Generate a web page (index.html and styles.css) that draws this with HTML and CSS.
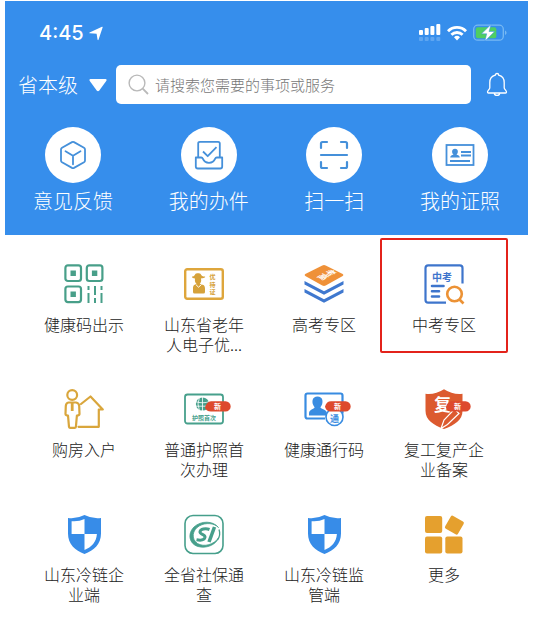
FILE: index.html
```html
<!DOCTYPE html>
<html lang="zh-CN">
<head>
<meta charset="utf-8">
<meta name="viewport" content="width=device-width, initial-scale=1">
<title>政务服务</title>
<link rel="stylesheet" href="styles.css">
</head>
<body>
<div class="app">
  <header class="header">
    <div class="status">
      <div class="status-side">
        <span class="time">4:45</span>
        <svg width="14" height="15" viewBox="0 0 14 15"><path d="M13 .8q.9-.2.6.7L9.500 13.800q-.5.900-.9 0L7.600 7.800 1 7.300q-1.200-.2-.4-.9z" fill="#fff"/></svg>
      </div>
      <div class="status-side status-right">
        <svg width="22" height="18" viewBox="0 0 22 18">
          <g fill="#fff"><rect x="0" y="6" width="4" height="5" rx="1"/><rect x="5.7" y="4" width="4" height="7" rx="1"/><rect x="11.4" y="2" width="4" height="9" rx="1"/><rect x="17.3" width="4" height="11" rx="1"/></g>
          <g fill="#5fa6f1"><rect y="13" width="4" height="4" rx="1"/><rect x="5.7" y="13" width="4" height="4" rx="1"/><rect x="11.4" y="13" width="4" height="4" rx="1"/><rect x="17.3" y="13" width="4" height="4" rx="1"/></g>
        </svg>
        <svg width="20" height="16" viewBox="0 0 20 16" fill="none" stroke="#fff" stroke-width="2.8"><path d="M1 6.2a12.6 12.6 0 0 1 18 0M4.4 9.8a8 8 0 0 1 11.2 0"/><path d="M7 12.2a4.4 4.4 0 0 1 6 0L10 15.6z" fill="#fff" stroke="none"/></svg>
        <svg width="34" height="18" viewBox="0 0 34 18">
          <rect x=".7" y="1.2" width="29.6" height="15" rx="4" fill="none" stroke="#78b9f3" stroke-width="1.3"/>
          <path d="M32 6.5c2 .8 2 3.700 0 4.500z" fill="#78b9f3"/>
          <rect x="2.800" y="3.200" width="20.500" height="11" rx="2" fill="#4fce62"/>
          <path d="M18 .6 8.500 9.800h5.200L12 17l9.600-9.500h-5.600z" fill="#fff" stroke="#3a90e8" stroke-width=".5"/>
        </svg>
      </div>
    </div>
    <form class="search-row">
      <div class="region">
        <select class="region-select" aria-label="地区"><option>省本级</option></select>
        <svg class="caret" width="18" height="13" viewBox="0 0 18 13"><path d="M1.500 0h15q1.800.4.700 2L10.300 11.600q-1.300 1.400-2.600 0L.8 2Q-.2.4 1.500 0z" fill="#fff"/></svg>
      </div>
      <label class="search">
        <svg width="21" height="21" viewBox="0 0 21 21" fill="none" stroke="#b9b9b9" stroke-width="1.400"><circle cx="9" cy="9" r="7.900"/><path d="m14.700 14.700 5.300 5.300" stroke-width="1.800"/></svg>
        <input class="search-input" type="text" placeholder="请搜索您需要的事项或服务" aria-label="搜索">
      </label>
      <button class="bell" type="button" aria-label="消息">
        <svg width="22" height="25" viewBox="0 0 22 25" fill="none" stroke="#fff" stroke-width="1.300" stroke-linejoin="round"><path d="M9.300 3.200a1.700 1.700 0 0 1 3.400 0c3.700 1 5.500 4 5.500 7.300v5.200c0 1.600 2.300 2.800 2.300 4.300 0 .7-.4 1-1 1h-17c-.6 0-1-.3-1-1 0-1.500 2.300-2.700 2.300-4.300v-5.200c0-3.300 1.800-6.300 5.500-7.300zM8.300 21.300c.4 2.700 5 2.700 5.400 0"/></svg>
      </button>
    </form>
    <nav class="quick">
      <a class="quick-item" href="#">
        <span class="disc"><svg width="28" height="30" viewBox="0 0 28 30" fill="none" stroke="#4590da" stroke-width="1.800" stroke-linejoin="round" stroke-linecap="round"><path d="M13 2.100q1-.5 2 0l10 5.600q1 .6 1 1.700v11.200q0 1.100-1 1.700l-10 5.600q-1 .5-2 0L3 22.300q-1-.6-1-1.700V9.400q0-1.100 1-1.700zM6.500 11.200l7.500 4.500 7.500-4.500M14 15.700v8.600"/></svg></span>
        意见反馈
      </a>
      <a class="quick-item" href="#">
        <span class="disc"><svg width="30" height="30" viewBox="0 0 30 30" fill="none" stroke="#4590da" stroke-width="1.800" stroke-linejoin="round"><path d="M4.200 17.500V3.500q0-1.700 1.700-1.700h18.200q1.700 0 1.700 1.700v14M9 11.500l4.700 4.700 8.800-9M4.500 17.500H1.800v9q0 2 2 2h22.400q2 0 2-2v-9h-5.500q-1 0-1.500 1.200c-2.300 5.500-10.100 5.500-12.400 0q-.5-1.200-1.500-1.200z"/></svg></span>
        我的办件
      </a>
      <a class="quick-item" href="#">
        <span class="disc"><svg width="30" height="30" viewBox="0 0 30 30" fill="none" stroke="#4590da" stroke-width="2.200" stroke-linecap="round"><path d="M2 8V3.500Q2 2 3.500 2H8M22 2h4.500Q28 2 28 3.500V8M2 22v4.500Q2 28 3.500 28H8M22 28h4.500q1.500 0 1.500-1.500V22M2 15h26"/></svg></span>
        扫一扫
      </a>
      <a class="quick-item" href="#">
        <span class="disc"><svg width="30" height="24" viewBox="0 0 30 24" fill="none" stroke="#4590da" stroke-width="1.800"><rect x="1.500" y="2" width="27" height="20"/><path d="M16 9h10M16 12.500h10M5 18h20"/><path d="M10 5.800c3.800 0 3.400 4.700 1.400 5.800 1.800.8 3.200 1 3.400 3H5.200c.2-2 1.600-2.200 3.400-3C6.600 10.500 6.200 5.800 10 5.800z" fill="#4590da" stroke="none"/></svg></span>
        我的证照
      </a>
    </nav>
  </header>

  <main class="grid">
    <a class="tile" href="#">
      <svg class="icon" viewBox="0 0 40 40" fill="none" stroke="#489f89" stroke-width="2.200"><rect x="1.400" y="1.400" width="15.600" height="15.600" rx="2.500"/><rect x="22.800" y="1.400" width="15.600" height="15.600" rx="2.500"/><rect x="1.400" y="22.500" width="15.600" height="15.600" rx="2.500"/><path d="M6.500 9.200h5.400M27.900 9.200h5.400M6.500 30.300h5.400" stroke-width="5.400"/><path d="M24.500 22v4M24.500 29v10M31 22v9M31 34v5M37.500 22v4M37.500 29v10" stroke-width="2"/></svg>
      <span class="label">健康码出示</span>
    </a>
    <a class="tile" href="#">
      <svg class="icon" viewBox="0 0 40 40"><rect x="1.200" y="5.200" width="37.600" height="29.600" rx="2" fill="none" stroke="#dea63c" stroke-width="2.400"/><g fill="#d6a23a"><path d="M8 12.600c1.500-.3 2.500-.7 3.200-2.400.5-1.200 5.100-1.200 5.600 0 .7 1.700 1.700 2.100 4.200 2.400.8 1.200-1.500 1.700-4 1.900.7 3.200-.5 4.400-1.200 5.200 4.500 1.300 5.200 2 5.200 5V28q0 1.500-1.500 1.500h-9Q9 29.500 9 28v-3.300c0-3 .7-3.700 3.500-5-1-.8-2-2-1.500-5.200-2-.1-3.500-.7-3-1.900z"/></g><path d="m11.800 20.500 2.700 2.700 3-2.700" fill="none" stroke="#fff"/><g class="mini" fill="#d6a23a" font-size="6"><text x="25.500" y="15">优</text><text x="25.500" y="22.500">待</text><text x="25.500" y="30">证</text></g></svg>
      <span class="label">山东省老年人电子优...</span>
    </a>
    <a class="tile" href="#">
      <svg class="icon" viewBox="0 0 40 40"><path d="M18.300 1.500q1.700-.8 3.400 0l17 8.600q1.500 1 0 2l-17 9.500q-1.700.8-3.400 0l-17-9.500q-1.500-1 0-2z" fill="#ef9138"/><path d="M.5 17v3.400L20 30.700l19.500-10.300V17L20 27.300zM.5 25v3.400L20 38.700l19.500-10.300V25L20 35.300z" fill="#3f78cf"/><g class="mini" fill="#fff" font-size="9"><text transform="matrix(.85 .45 -.85 .5 20 8.500)">考</text><text transform="matrix(.85 .45 -.85 .5 12.500 12.500)">高</text></g></svg>
      <span class="label">高考专区</span>
    </a>
    <a class="tile tile-marked" href="#">
      <svg class="icon" viewBox="0 0 40 40" fill="none" stroke="#3e75cc" stroke-width="2.200"><path d="M38.500 19.500V4q0-2.600-2.600-2.600H4.100Q1.500 1.400 1.500 4v32q0 2.600 2.600 2.600H22"/><path d="M8 22h11.500M8 27.300h7M8 32.500h7" stroke-width="2.600" stroke-linecap="round"/><g stroke="#ec9235" stroke-width="2.600"><circle cx="30.500" cy="30" r="7.300"/><path d="m35 35 4.500 4.500"/></g><text class="mini" x="8" y="16.500" font-size="10" fill="#3e75cc" stroke="none">中考</text></svg>
      <span class="label">中考专区</span>
    </a>
    <a class="tile" href="#">
      <svg class="icon" viewBox="0 0 40 40" fill="none" stroke="#d9a63c" stroke-width="2.200" stroke-linejoin="round"><circle cx="8.200" cy="6" r="4.900"/><path d="M4.500 13.500h7.500q3 .5 3.200 3.500l.3 8q-.2 1.500-2.600 1.500l-1 11.300q0 1-1 1H6q-1 0-1-1L4 26.500q-2.500 0-2.500-1.500l.3-8q.2-3 2.700-3.500z"/><path d="M8.200 13.500v8.500" stroke-width="2.800"/><path d="M14.500 37.800h20.300V20.500h4L26.500 7.500 17 15" stroke-linecap="round"/></svg>
      <span class="label">购房入户</span>
    </a>
    <a class="tile" href="#">
      <svg class="icon" viewBox="0 0 40 40"><rect x="1" y="5.500" width="38" height="29" rx="2.500" fill="none" stroke="#47a08c" stroke-width="1.800"/><circle cx="18.500" cy="15" r="6.600" fill="#47a08c"/><path d="M11 12.500c5 1.700 10 1.700 15 0M11 17.200h15M18.500 8v14M15.500 8q-3 7 0 14" fill="none" stroke="#fff" stroke-width=".8"/><text class="mini" x="8" y="30.500" font-size="6" fill="#47a08c">护照首次</text><path d="M21 18.500c1-4 3-6.300 6-6.300h14.500a5.200 5.200 0 0 1 0 10.400H27c-3 0-5.500-1.500-6-4.100z" fill="#dd4a2d"/><text class="mini" x="30" y="20" font-size="7" fill="#fff">新</text></svg>
      <span class="label">普通护照首次办理</span>
    </a>
    <a class="tile" href="#">
      <svg class="icon" viewBox="0 0 40 40"><path d="M21 29.500H3.500q-2 0-2-2V6.500q0-2 2-2h33q2 0 2 2v18" fill="none" stroke="#398ce1" stroke-width="2.200"/><path d="M13.500 7.500c5.500 0 5.500 5.500 4.500 8-.4 1.200-1 2-1.600 2.700.5 2.300 6.600 1.800 6.600 6.300v2H5v-2c0-4.500 5.100-4 5.600-6.300-.6-.7-1.200-1.500-1.600-2.700-1-2.500-1-8 4.500-8z" fill="#398ce1"/><circle cx="30.500" cy="28" r="8.500" fill="#fff" stroke="#398ce1" stroke-width="1.600"/><text class="mini" x="26" y="33" font-size="9" fill="#398ce1">通</text><path d="M21 17.500c1-3.500 3-5.300 6-5.300h14.500a5.200 5.200 0 0 1 0 10.400H27c-3 0-5.500-2-6-5.100z" fill="#dd4a2d"/><text class="mini" x="30" y="20" font-size="7" fill="#fff">新</text></svg>
      <span class="label">健康通行码</span>
    </a>
    <a class="tile" href="#">
      <svg class="icon" viewBox="0 0 40 40"><path d="M20 .3q9 5.700 18.500 4.500v17C38.500 31 31 36 20 40 9 36 1.500 31 1.500 21.800V4.800Q11 6 20 .3z" fill="#dc5a2f"/><path d="m17 39.500 3-8.500 10.500-11 4.500 4.500-11.500 11z" fill="#dc5a2f" stroke="#fff" stroke-width="1.200"/><text class="mini" x="10" y="22" font-size="17" fill="#fff">复</text><path d="M22 18c1-4 3-5.800 5.500-5.800h14a5.200 5.200 0 0 1 0 10.400h-14c-3 0-5.500-1.600-5.500-4.600z" fill="#dd4a2d"/><text class="mini" x="30" y="20" font-size="7" fill="#fff">新</text></svg>
      <span class="label">复工复产企业备案</span>
    </a>
    <a class="tile" href="#">
      <svg class="icon" viewBox="0 0 40 40"><path d="M20.500 1Q28 5 37 4v15.500C37 30 30 36.500 20.500 40 11 36.500 4 30 4 19.500V4Q13 5 20.500 1z" fill="#378ce8"/><path d="M20.500 5v15H7.600V7.200Q15 7.800 20.500 5zM20.500 20h12.400C32.500 28 27.500 33.300 20.500 36z" fill="#fff"/></svg>
      <span class="label">山东冷链企业端</span>
    </a>
    <a class="tile" href="#">
      <svg class="icon" viewBox="0 0 40 40" fill="none" stroke="#469f8b"><rect x="1" y="1.500" width="38" height="38" rx="8" stroke-width="1.600"/><path d="M34.500 13.500C29 6.500 17 6.500 10 13c-7 7-4.500 17 4 19.500 8 2.200 17.500-1.200 20.500-8.500C30 30.500 20 33.500 13.500 29.500 7 25 8 16 15.500 11.800 22 8.300 30 9 34.500 13.500z" fill="#469f8b" stroke-width=".8"/><path d="M25.500 15.500c-4-1.500-9-.5-9.500 2.200-.4 2.800 5.500 2.500 5 5.600-.5 2.700-4.500 3.200-8.500 2.500" stroke-width="3"/><path d="m30.500 13-5.500 15" stroke-width="3.500"/><path d="M35 15.500q2 5.500-1.500 10.500" stroke-width="1.300"/></svg>
      <span class="label">全省社保通查</span>
    </a>
    <a class="tile" href="#">
      <svg class="icon" viewBox="0 0 40 40"><path d="M20.500 1Q28 5 37 4v15.500C37 30 30 36.500 20.500 40 11 36.500 4 30 4 19.500V4Q13 5 20.500 1z" fill="#378ce8"/><path d="M20.500 5v15H7.600V7.200Q15 7.800 20.500 5zM20.500 20h12.400C32.500 28 27.500 33.300 20.500 36z" fill="#fff"/></svg>
      <span class="label">山东冷链监管端</span>
    </a>
    <a class="tile" href="#">
      <svg class="icon" viewBox="0 0 40 40" fill="#e5a02e"><rect x="1" y="2" width="17.200" height="17" rx="2"/><rect x="1" y="22.500" width="17.200" height="17" rx="2"/><rect x="21.300" y="22.500" width="17.200" height="17" rx="2"/><rect x="23" y="3.700" width="14.800" height="14.800" rx="1.800" transform="rotate(30 30.400 11.100)"/></svg>
      <span class="label">更多</span>
    </a>
  </main>
</div>
</body>
</html>
```

FILE: styles.css
```css
* {
  box-sizing: border-box;
}

body {
  margin: 0;
  background: #fff;
  color: #222;
  font-family: "Noto Sans CJK SC", sans-serif;
  font-size: 16px;
  font-weight: 300;
  line-height: 20px;
}

svg {
  display: block;
  flex: none;
}

a {
  color: inherit;
  text-decoration: none;
}

.app {
  margin: 1px 6px 0 5px;
}

.header {
  padding-bottom: 20px;
  background: #368eec;
  color: #fff;
}

.status {
  display: flex;
  justify-content: space-between;
  align-items: center;
  padding: 20px 21px 0 34px;
}

.status-side {
  display: flex;
  align-items: center;
  gap: 5px;
}

.status-right {
  gap: 6px;
}

.time {
  font-family: Inter, sans-serif;
  font-size: 20px;
  font-weight: 500;
  line-height: 24px;
}

.search-row {
  display: flex;
  align-items: center;
  padding: 20px 20px 0 13px;
}

.region {
  position: relative;
  margin-right: 8px;
}

.region-select {
  display: block;
  appearance: none;
  width: 90px;
  padding: 0;
  border: 0;
  background: transparent;
  color: #fff;
  font: inherit;
  font-size: 20px;
  line-height: 28px;
}

.caret {
  position: absolute;
  top: 8px;
  right: 1px;
  pointer-events: none;
}

.search {
  display: flex;
  flex: 1;
  align-items: center;
  gap: 6px;
  min-width: 0;
  height: 39px;
  padding: 0 12px;
  border-radius: 5px;
  background: #fff;
}

.search-input {
  flex: 1;
  min-width: 0;
  padding: 0;
  border: 0;
  outline: 0;
  background: transparent;
  color: #333;
  font: inherit;
  font-size: 15px;
}

.search-input::placeholder {
  color: #777;
}

.bell {
  margin-left: 15px;
  padding: 0;
  border: 0;
  background: transparent;
}

.quick {
  display: flex;
  justify-content: space-between;
  padding: 23px 28px 0;
}

.quick-item {
  display: flex;
  flex-direction: column;
  align-items: center;
  gap: 4px;
  font-size: 20px;
  line-height: 28px;
}

.disc {
  display: grid;
  place-items: center;
  width: 56px;
  height: 56px;
  border-radius: 50%;
  background: #fff;
}

.grid {
  display: grid;
  grid-template-columns: repeat(4, 1fr);
  row-gap: 34px;
  padding: 29px 24px 14px 19px;
}

.tile {
  position: relative;
  display: flex;
  flex-direction: column;
  align-items: center;
  gap: 10px;
}

.tile-marked::after {
  content: "";
  position: absolute;
  inset: -26px -4px 2px;
  border: 2px solid #e3231b;
  border-radius: 2px;
}

.icon {
  width: 40px;
  height: 40px;
  overflow: visible;
}

.label {
  width: 80px;
  padding-bottom: 1px;
  text-align: center;
}

.mini {
  font-family: "Noto Sans CJK SC", sans-serif;
  font-weight: 700;
}
```
